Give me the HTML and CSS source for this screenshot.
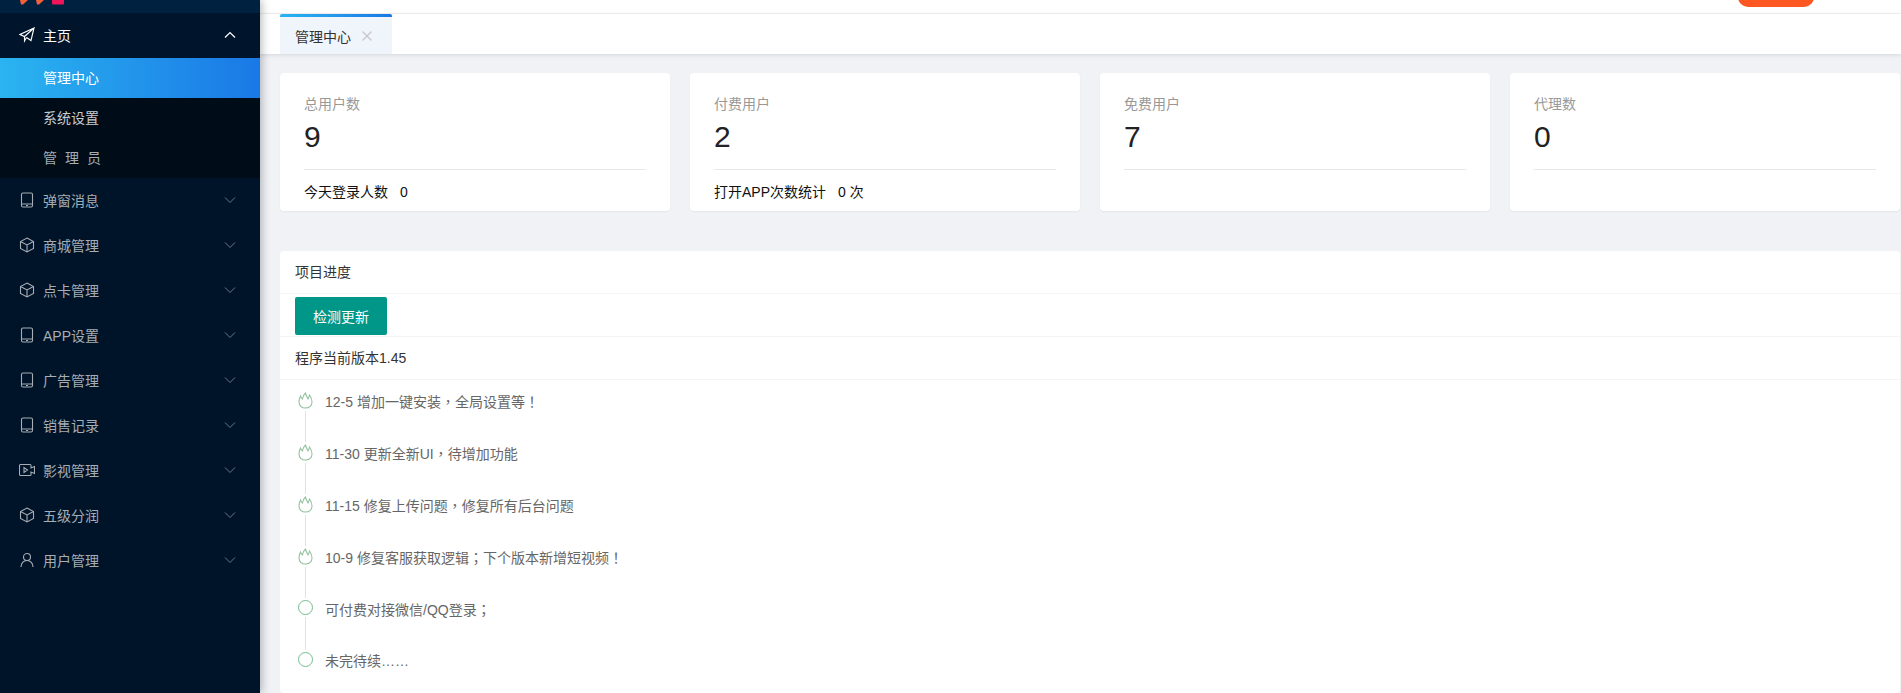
FILE: index.html
```html
<!DOCTYPE html>
<html>

<head>
  <meta charset="UTF-8" />
  <meta name="viewport" content="width=device-width, initial-scale=1.0">
  <title>管理中心</title>
  <link rel="stylesheet" href="styles.css">
</head>

<body>
  <!-- shared icons -->
  <svg class="defs">
    <symbol id="i-phone" viewBox="0 0 16 16"><rect x="2.500" y="1" width="11" height="14" rx="1.500" /><path d="M2.500 12h11M7 13.500h2" /></symbol>
    <symbol id="i-box" viewBox="0 0 16 16"><path d="M8 1l6.500 3.500v7L8 15l-6.500-3.500v-7zM1.500 4.500 8 8l6.500-3.500M8 8v7" /></symbol>
    <symbol id="i-down" viewBox="0 0 12 8"><path d="M1 1.500l5 5 5-5" /></symbol>
    <symbol id="i-flame" viewBox="0 0 15 17"><path d="M7.500 16C3.500 16 1 13.500 1 10c0-2 .5-4 1.500-6 .5 1.500 1 2.500 2 3 .3-2 1.300-4.500 3-6 .5 2 1.500 4 2.500 6 .7-1 1.200-2.500 1.500-4 1.500 2 2.500 4.500 2.500 7 0 3.500-2.500 6-6.500 6z" /></symbol>
  </svg>

  <div class="sidebar">
    <div class="logo">
      <svg width="44" height="13" viewBox="0 0 44 13">
        <path d="M0 0h8L3 4.500H1z" fill="#f4603c" />
        <path d="M16 0h8l-5 4.500h-2z" fill="#f4603c" />
        <rect x="32" y="-1" width="12" height="5.500" rx="1" fill="#f0145a" />
      </svg>
    </div>
    <ul class="menu">
      <li class="menu-item open">
        <svg class="icon" viewBox="0 0 16 16"><path d="M15 1 1 7.500l4.500 2L15 1l-3 12.500-4.500-3M5.500 9.500V14l2-3.500" /></svg>
        <span>主页</span>
        <svg class="arrow" viewBox="0 0 12 8"><path d="M1 6.500 6 1.500l5 5" /></svg>
      </li>
      <li class="sub-item active">管理中心</li>
      <li class="sub-item">系统设置</li>
      <li class="sub-item spaced">管理员</li>
      <li class="menu-item">
        <svg class="icon"><use href="#i-phone" /></svg>
        <span>弹窗消息</span>
        <svg class="arrow"><use href="#i-down" /></svg>
      </li>
      <li class="menu-item">
        <svg class="icon"><use href="#i-box" /></svg>
        <span>商城管理</span>
        <svg class="arrow"><use href="#i-down" /></svg>
      </li>
      <li class="menu-item">
        <svg class="icon"><use href="#i-box" /></svg>
        <span>点卡管理</span>
        <svg class="arrow"><use href="#i-down" /></svg>
      </li>
      <li class="menu-item">
        <svg class="icon"><use href="#i-phone" /></svg>
        <span>APP设置</span>
        <svg class="arrow"><use href="#i-down" /></svg>
      </li>
      <li class="menu-item">
        <svg class="icon"><use href="#i-phone" /></svg>
        <span>广告管理</span>
        <svg class="arrow"><use href="#i-down" /></svg>
      </li>
      <li class="menu-item">
        <svg class="icon"><use href="#i-phone" /></svg>
        <span>销售记录</span>
        <svg class="arrow"><use href="#i-down" /></svg>
      </li>
      <li class="menu-item">
        <svg class="icon" viewBox="0 0 16 16"><path d="M12 6V3.500a1 1 0 0 0-1-1H1.500a1 1 0 0 0-1 1v9a1 1 0 0 0 1 1H11a1 1 0 0 0 1-1V10l3.500 1.500v-7zM5 5.500v5L8.500 8z" /></svg>
        <span>影视管理</span>
        <svg class="arrow"><use href="#i-down" /></svg>
      </li>
      <li class="menu-item">
        <svg class="icon"><use href="#i-box" /></svg>
        <span>五级分润</span>
        <svg class="arrow"><use href="#i-down" /></svg>
      </li>
      <li class="menu-item">
        <svg class="icon" viewBox="0 0 16 16"><circle cx="8" cy="5" r="3.500" /><path d="M2 15c0-3.500 2.300-6.500 6-6.500s6 3 6 6.500" /></svg>
        <span>用户管理</span>
        <svg class="arrow"><use href="#i-down" /></svg>
      </li>
    </ul>
  </div>

  <div class="main">
    <div class="topbar">
      <div class="top-btn"></div>
    </div>
    <div class="tabbar">
      <div class="tab">
        <span>管理中心</span>
        <svg class="tab-close" viewBox="0 0 10 10"><path d="M.5.500l9 9M9.500.500l-9 9" /></svg>
      </div>
    </div>

    <div class="content">
      <div class="stats">
        <div class="card">
          <p class="card-label">总用户数</p>
          <p class="card-num">9</p>
          <div class="card-foot"><span>今天登录人数</span><span>0</span></div>
        </div>
        <div class="card">
          <p class="card-label">付费用户</p>
          <p class="card-num">2</p>
          <div class="card-foot"><span>打开APP次数统计</span><span>0 次</span></div>
        </div>
        <div class="card">
          <p class="card-label">免费用户</p>
          <p class="card-num">7</p>
          <div class="card-foot"></div>
        </div>
        <div class="card">
          <p class="card-label">代理数</p>
          <p class="card-num">0</p>
          <div class="card-foot"></div>
        </div>
      </div>

      <div class="panel">
        <div class="panel-row panel-title">项目进度</div>
        <div class="panel-row panel-btn"><button class="btn">检测更新</button></div>
        <div class="panel-row panel-version">程序当前版本1.45</div>
        <ul class="timeline">
          <li>
            <div class="tl-axis">
              <svg class="flame"><use href="#i-flame" /></svg>
              <i class="tl-line"></i>
            </div>
            <div class="tl-text">12-5 增加一键安装<span class="punc">，</span>全局设置等<span class="punc">！</span></div>
          </li>
          <li>
            <div class="tl-axis">
              <svg class="flame"><use href="#i-flame" /></svg>
              <i class="tl-line"></i>
            </div>
            <div class="tl-text">11-30 更新全新UI<span class="punc">，</span>待增加功能</div>
          </li>
          <li>
            <div class="tl-axis">
              <svg class="flame"><use href="#i-flame" /></svg>
              <i class="tl-line"></i>
            </div>
            <div class="tl-text">11-15 修复上传问题<span class="punc">，</span>修复所有后台问题</div>
          </li>
          <li>
            <div class="tl-axis">
              <svg class="flame"><use href="#i-flame" /></svg>
              <i class="tl-line"></i>
            </div>
            <div class="tl-text">10-9 修复客服获取逻辑<span class="punc">；</span>下个版本新增短视频<span class="punc">！</span></div>
          </li>
          <li>
            <div class="tl-axis">
              <i class="tl-dot"></i>
              <i class="tl-line"></i>
            </div>
            <div class="tl-text">可付费对接微信/QQ登录<span class="punc">；</span></div>
          </li>
          <li>
            <div class="tl-axis">
              <i class="tl-dot"></i>
            </div>
            <div class="tl-text">未完待续……</div>
          </li>
        </ul>
      </div>
    </div>
  </div>
</body>

</html>
```

FILE: styles.css
```css
* {
  margin: 0;
  padding: 0;
  box-sizing: border-box;
  font-family: "Liberation Sans", "Noto Sans CJK SC", sans-serif;
}

body {
  display: flex;
  height: 693px;
  overflow: hidden;
  background-color: #f0f2f5;
  color: #333;
  font-size: 14px;
}

ul {
  list-style: none;
}

.defs {
  display: none;
}

/* sidebar */
.sidebar {
  width: 260px;
  flex-shrink: 0;
  background-color: #001429;
  box-shadow: 2px 0 8px rgba(29, 35, 41, 0.3);
  position: relative;
  z-index: 2;
}

.logo {
  height: 13px;
  background-color: #002140;
  padding-left: 20px;
  overflow: hidden;
}

.logo svg {
  display: block;
}

.menu-item {
  display: flex;
  align-items: center;
  height: 45px;
  padding: 0 24px 2px 19px;
  color: #a6adb4;
}

.menu-item span {
  flex: 1;
  margin-left: 8px;
}

.menu-item.open {
  color: #fff;
  background-color: #00152b;
}

.icon {
  width: 16px;
  height: 16px;
  fill: none;
  stroke: currentColor;
  stroke-width: 1.1;
}

.arrow {
  width: 12px;
  height: 8px;
  fill: none;
  stroke: #6b7684;
  stroke-width: 1;
}

.open .arrow {
  stroke: #fff;
  stroke-width: 1.2;
}

.sub-item {
  height: 40px;
  line-height: 40px;
  padding-left: 43px;
  background-color: #000c17;
  color: #c8ccd0;
}

.sub-item.active {
  background: linear-gradient(90deg, #2ab4f0, #1a78e6);
  color: #fff;
}

.sub-item.spaced {
  letter-spacing: 8px;
  color: #a6adb4;
}

/* top */
.main {
  flex: 1;
  min-width: 0;
}

.topbar {
  display: flex;
  justify-content: flex-end;
  height: 14px;
  background-color: #fff;
  border-bottom: 1px solid #f2f2f2;
  overflow: hidden;
}

.top-btn {
  width: 76px;
  height: 38px;
  margin: -31px 87px 0 0;
  border-radius: 10px;
  background-color: #ff5722;
}

.tabbar {
  height: 40px;
  padding-left: 20px;
  background-color: #fff;
  box-shadow: 0 1px 4px rgba(0, 21, 41, 0.12);
}

.tab {
  display: flex;
  align-items: center;
  width: 112px;
  height: 40px;
  padding: 3px 0 0 15px;
  background-color: #f0f4fb;
  color: #333;
  position: relative;
}

.tab::before {
  content: "";
  position: absolute;
  left: 0;
  right: 0;
  top: 0;
  height: 3px;
  border-radius: 2px 2px 0 0;
  background: linear-gradient(90deg, #2ab4f0, #1a78e6);
}

.tab-close {
  width: 10px;
  height: 10px;
  margin-left: 11px;
  fill: none;
  stroke: #c4c6ca;
  stroke-width: 1.2;
}

/* content */
.content {
  padding: 19px 1px 0 20px;
}

.stats {
  display: grid;
  grid-template-columns: repeat(4, 1fr);
  gap: 20px;
}

.card {
  height: 138px;
  padding: 21px 24px 0;
  background-color: #fff;
  border-radius: 4px;
  box-shadow: 0 1px 2px rgba(0, 0, 0, 0.05);
}

.card-label {
  line-height: 20px;
  color: #999;
}

.card-num {
  height: 56px;
  padding-top: 5px;
  font-size: 30px;
  line-height: 36px;
  color: #222;
  border-bottom: 1px solid #e8e8e8;
}

.card-foot {
  display: flex;
  gap: 12px;
  padding-top: 12px;
  line-height: 20px;
  color: #111;
}

.panel {
  margin-top: 40px;
  height: 442px;
  overflow: hidden;
  background-color: #fff;
  border-radius: 4px;
}

.panel-row {
  padding: 0 15px;
  border-bottom: 1px solid #f4f4f4;
}

.panel-title,
.panel-version {
  height: 43px;
  line-height: 42px;
}

.panel-btn {
  height: 43px;
  padding-top: 3px;
}

.btn {
  display: block;
  width: 92px;
  height: 38px;
  border: none;
  border-radius: 2px;
  background-color: #009688;
  color: #fff;
  font-size: 14px;
}

.timeline {
  padding: 12px 0 0 18px;
}

.timeline li {
  display: flex;
  height: 52px;
}

.tl-axis {
  display: flex;
  flex-direction: column;
  align-items: center;
  width: 15px;
}

.flame {
  width: 15px;
  height: 17px;
  flex-shrink: 0;
  fill: none;
  stroke: #93c29f;
  stroke-width: 1.1;
}

.tl-dot {
  width: 15px;
  height: 15px;
  flex-shrink: 0;
  border: 1px solid #74bd8f;
  border-radius: 50%;
}

.tl-line {
  width: 1px;
  flex: 1;
  margin: 2px 0;
  background-color: #e2e2e2;
}

.tl-text {
  margin: -1px 0 0 12px;
  line-height: 20px;
  color: #666;
}

/* full width marks sit in the middle of their box in the reference */
.punc {
  font-family: "Noto Sans CJK TC", sans-serif;
}
```
